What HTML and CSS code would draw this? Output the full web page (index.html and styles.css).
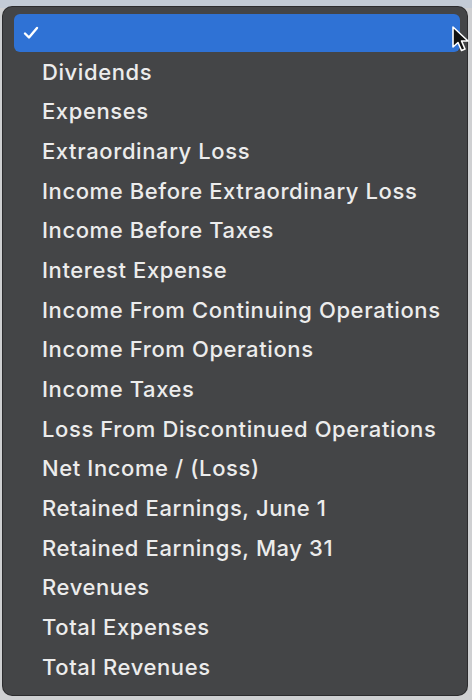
FILE: index.html
```html
<!DOCTYPE html>
<html lang="en">

<head>
    <meta charset="UTF-8">
    <meta name="viewport" content="width=device-width, initial-scale=1.0">
    <title>Account Menu</title>
    <link rel="stylesheet" href="styles.css">
</head>

<body>
    <div class="menu">
        <div class="menu-item selected">
            <svg class="check" width="16" height="14" viewBox="0 0 16 14">
                <path d="M2 7.5 L6 11.5 L14 2" fill="none" stroke="#fff" stroke-width="2.4" stroke-linecap="round" stroke-linejoin="round"/>
            </svg>
        </div>
        <div class="menu-item">Dividends</div>
        <div class="menu-item">Expenses</div>
        <div class="menu-item">Extraordinary Loss</div>
        <div class="menu-item">Income Before Extraordinary Loss</div>
        <div class="menu-item">Income Before Taxes</div>
        <div class="menu-item">Interest Expense</div>
        <div class="menu-item">Income From Continuing Operations</div>
        <div class="menu-item">Income From Operations</div>
        <div class="menu-item">Income Taxes</div>
        <div class="menu-item">Loss From Discontinued Operations</div>
        <div class="menu-item">Net Income / (Loss)</div>
        <div class="menu-item">Retained Earnings, June 1</div>
        <div class="menu-item">Retained Earnings, May 31</div>
        <div class="menu-item">Revenues</div>
        <div class="menu-item">Total Expenses</div>
        <div class="menu-item">Total Revenues</div>

        <!-- mouse pointer over the highlighted row -->
        <svg class="cursor" width="22" height="28" viewBox="0 0 22 28">
            <path d="M2 2 L2 22 L7 17.5 L10.5 25.5 L14 24 L10.5 16 L17 16 Z" fill="#111" stroke="#fff" stroke-width="1.6" stroke-linejoin="round"/>
        </svg>
    </div>
</body>

</html>
```
FILE: styles.css
```css
body {
    margin: 0;
    padding: 7px 5px 6px 3px;
    background: linear-gradient(#c3cbd6 0, #c3cbd6 8px, #cfd0d2 8px);
    font-family: Inter, "Liberation Sans", Arial, sans-serif;
}

.menu {
    position: relative;
    background-color: #444547;
    border-radius: 9px;
    box-shadow: 0 0 0 1px #2c2c2e;
    padding: 7px 7px 7px 11px;
}

.menu-item {
    height: 39.7px;
    line-height: 39.7px;
    padding-left: 28px;
    color: #ececec;
    font-size: 22px;
    font-weight: 500;
    letter-spacing: 0.6px;
    white-space: nowrap;
}

.menu-item.selected {
    height: 38px;
    padding: 12px 0 0 9px;
    box-sizing: border-box;
    background-color: #2f72d5;
    border-radius: 6px;
    margin-bottom: 0.5px;
}

.check {
    display: block;
}

.cursor {
    position: absolute;
    top: 18px;
    right: -6px;
}
```
